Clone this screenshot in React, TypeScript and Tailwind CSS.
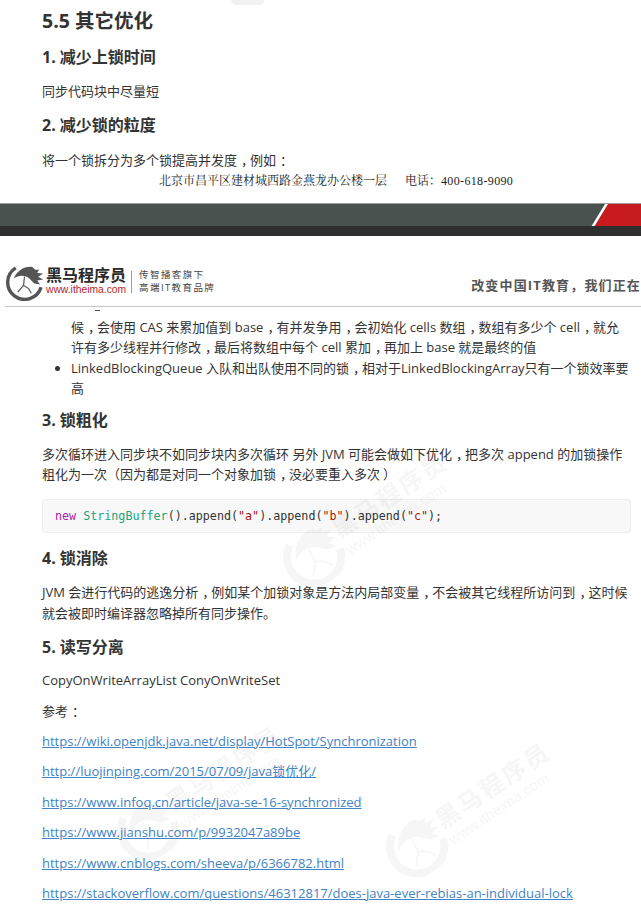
import { Fragment } from "react";

const body = "text-[13px] leading-[20.4px]";
const h3 = "text-[16px] leading-[24px] font-bold text-[#333]";
const links = [
  "https://wiki.openjdk.java.net/display/HotSpot/Synchronization",
  "http://luojinping.com/2015/07/09/java锁优化/",
  "https://www.infoq.cn/article/java-se-16-synchronized",
  "https://www.jianshu.com/p/9932047a89be",
  "https://www.cnblogs.com/sheeva/p/6366782.html",
  "https://stackoverflow.com/questions/46312817/does-java-ever-rebias-an-individual-lock",
];

// The reference's font centres its full-width punctuation in the em box.
function T({ children }: { children: string }) {
  const parts = children.split(/([，：）])/);
  return (
    <>
      {parts.map((p, i) => {
        if (p === "，" || p === "：") return <span key={i} className="ml-[4px] tracking-[-4px]">{p}</span>;
        if (p === "）") return <span key={i} className="ml-[3px] tracking-[-3px]">{p}</span>;
        return <Fragment key={i}>{p}</Fragment>;
      })}
    </>
  );
}

function Line({ children }: { children: string }) {
  return (
    <span className="block whitespace-nowrap">
      <T>{children}</T>
    </span>
  );
}

function Horse({ size, color, stroke }: { size: number; color: string; stroke: number }) {
  return (
    <svg width={size} height={size} viewBox="0 0 40 40" fill="none" className="shrink-0">
      <path d="M11 6 A17.5 17.5 0 1 0 37 26" stroke={color} strokeWidth={stroke} />
      <path d="M9 17 C12 9 20 4 28 5 L31 8 L35 8 L33 11 L39 12 L34 15 L39 18 L33 19 L36 23 L30 22 L26 18 C22 13 14 13 9 17 Z" fill={color} />
      <path d="M20 15 L19 24 L13 31 M19 24 L24 27 L27 32" stroke={color} strokeWidth={1.2} />
    </svg>
  );
}

function Watermark({ className }: { className: string }) {
  return (
    <div className={`absolute flex items-center gap-0 -rotate-[33.5deg] opacity-[0.04] pointer-events-none ${className}`}>
      <Horse size={62} color="#444" stroke={5} />
      <div className="flex flex-col">
        <span className="text-[24px] leading-[29px] tracking-[2.5px] font-bold text-[#333] whitespace-nowrap">黑马程序员</span>
        <span className="text-[15px] leading-[18px] text-[#333] font-['Liberation_Sans',sans-serif]">www.itheima.com</span>
      </div>
    </div>
  );
}

export default function App() {
  return (
    <div className="relative w-[641px] h-[924px] overflow-hidden bg-white text-[#333] font-['Open_Sans','Noto_Sans_CJK_SC',sans-serif]">
      <div className="absolute left-[231px] top-0 w-[33px] h-[5px] rounded-b-full bg-[#f1f1f1]" />
      {/* first page tail */}
      <section className="h-[236px] flex flex-col">
        <div className="flex-1 flex flex-col pl-[42px] pt-[7px]">
          <h2 className="text-[19.5px] leading-[28px] font-bold text-[#333]">5.5 其它优化</h2>
          <h3 className={`${h3} mt-[10px]`}>1. 减少上锁时间</h3>
          <p className={`${body} mt-[12px]`}>同步代码块中尽量短</p>
          <h3 className={`${h3} mt-[12px]`}>2. 减少锁的粒度</h3>
          <p className={`${body} mt-[13px]`}><T>将一个锁拆分为多个锁提高并发度，例如：</T></p>
          <p className="text-[12px] leading-[18px] mt-[1px] ml-[117px] text-[#222] whitespace-pre font-['Liberation_Serif','Noto_Serif_CJK_SC','Noto_Sans_CJK_SC',serif]">
            北京市昌平区建材城西路金燕龙办公楼一层      电话：<span className="tracking-[0.35px]">400-618-9090</span>
          </p>
        </div>
        <div className="h-[23px] bg-[#4a5250] border-t border-[#9a9e9d] flex justify-end overflow-hidden">
          <svg width="50" height="23" viewBox="0 0 50 23">
            <polygon points="17,0 50,0 50,23 3,23" fill="#c71b1e" />
            <polygon points="14,0 17,0 3,23 0,23" fill="#ffffff" />
          </svg>
        </div>
        <div className="h-[10px] bg-[#2f2f2f]" />
      </section>

      {/* second page */}
      <section className="relative">
        <header className="h-[71px] ml-[5px] border-b border-[#c8c8c8] flex items-center pt-[21px]">
          <Horse size={39} color="#555" stroke={3.5} />
          <div className="ml-[2px] flex flex-col">
            <span className="text-[16px] leading-[17px] font-bold text-[#2b2b2b] whitespace-nowrap">黑马程序员</span>
            <span className="text-[10.3px] leading-[12px] text-[#b5252a] font-['Liberation_Sans',sans-serif]">www.itheima.com</span>
          </div>
          <div className="w-px h-[22px] bg-[#999] ml-[5px] mr-[7px]" />
          <div className="flex flex-col text-[9.5px] leading-[12.5px] tracking-[1.4px] text-[#444] whitespace-nowrap">
            <span>传智播客旗下</span>
            <span>高端IT教育品牌</span>
          </div>
          <span className="ml-auto mt-[6px] text-[13px] leading-[18px] tracking-[1.15px] font-bold text-[#555] whitespace-nowrap">改变中国IT教育，我们正在</span>
        </header>
        <div className="absolute left-[95px] top-[74px] w-[5px] h-px bg-[#555]" />

        <main className="flex flex-col pl-[42px] pr-[10px] pt-[10px]">
          <ul className="list-disc pl-[29px]">
            <li className={`${body} list-none`}>
              <Line>候，会使用 CAS 来累加值到 base，有并发争用，会初始化 cells 数组，数组有多少个 cell，就允</Line>
              <Line>许有多少线程并行修改，最后将数组中每个 cell 累加，再加上 base 就是最终的值</Line>
            </li>
            <li className={body}>
              <Line>LinkedBlockingQueue 入队和出队使用不同的锁，相对于LinkedBlockingArray只有一个锁效率要</Line>
              <Line>高</Line>
            </li>
          </ul>
          <h3 className={`${h3} mt-[9px]`}>3. 锁粗化</h3>
          <p className={`${body} mt-[12px]`}>
            <Line>多次循环进入同步块不如同步块内多次循环 另外 JVM 可能会做如下优化，把多次 append 的加锁操作</Line>
            <Line>粗化为一次（因为都是对同一个对象加锁，没必要重入多次）</Line>
          </p>
          <div className="mt-[15px] h-[34px] flex items-center pl-[12px] bg-[#f8f8f8] border border-[#eeeeee] rounded-[3px]">
            <code className="text-[11.7px] text-[#333] whitespace-pre font-['DejaVu_Sans_Mono',monospace]">
              <span className="text-[#a626a4]">new</span> <span className="text-[#22a37a]">StringBuffer</span>().append(<span className="text-[#a31515]">"a"</span>).append(<span className="text-[#a31515]">"b"</span>).append(<span className="text-[#a31515]">"c"</span>);
            </code>
          </div>
          <h3 className={`${h3} mt-[13px]`}>4. 锁消除</h3>
          <p className={`${body} mt-[12px]`}>
            <Line>JVM 会进行代码的逃逸分析，例如某个加锁对象是方法内局部变量，不会被其它线程所访问到，这时候</Line>
            <Line>就会被即时编译器忽略掉所有同步操作。</Line>
          </p>
          <h3 className={`${h3} mt-[12px]`}>5. 读写分离</h3>
          <p className={`${body} mt-[11px]`}>CopyOnWriteArrayList ConyOnWriteSet</p>
          <p className={`${body} mt-[10px]`}><T>参考：</T></p>
          <div className="flex flex-col gap-[10px] mt-[10px]">
            {links.map((l) => (
              <a key={l} className={`${body} text-[#4183c4] underline`} href="#">{l}</a>
            ))}
          </div>
        </main>
      </section>

      <Watermark className="left-[271px] top-[488px]" />
      <Watermark className="left-[105px] top-[761px]" />
      <Watermark className="left-[374px] top-[778px]" />
    </div>
  );
}
